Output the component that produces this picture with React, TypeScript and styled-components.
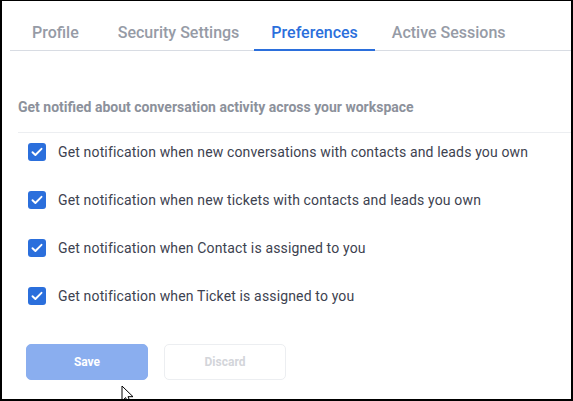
import React from 'react';
import styled, { createGlobalStyle } from 'styled-components';

const GlobalStyle = createGlobalStyle`
  html, body {
    margin: 0;
    padding: 0;
    background: #fff;
  }
  * {
    box-sizing: border-box;
  }
`;

const TABS = ['Profile', 'Security Settings', 'Preferences', 'Active Sessions'];
const OPTIONS = [
  'Get notification when new conversations with contacts and leads you own',
  'Get notification when new tickets with contacts and leads you own',
  'Get notification when Contact is assigned to you',
  'Get notification when Ticket is assigned to you',
];

export default function App(): JSX.Element {
  return (
    <>
      <GlobalStyle />
      <Frame>
        <TabList>
          {TABS.map((tab) => (
            <Tab key={tab} $active={tab === 'Preferences'} type="button">
              {tab}
            </Tab>
          ))}
        </TabList>
        <Section>
          <Heading>Get notified about conversation activity across your workspace</Heading>
          <OptionList>
            {OPTIONS.map((option) => (
              <Option key={option}>
                <Checkbox>
                  <svg width="12" height="10" viewBox="0 0 12 10" fill="none">
                    <path d="M1.5 5.2L4.4 8L10.5 1.8" stroke="#fff" strokeWidth="1.9" strokeLinecap="round" strokeLinejoin="round" />
                  </svg>
                </Checkbox>
                <OptionLabel>{option}</OptionLabel>
              </Option>
            ))}
          </OptionList>
          <Actions>
            <Button $primary type="button">Save</Button>
            <Button type="button">Discard</Button>
          </Actions>
        </Section>
        <Cursor width="14" height="20" viewBox="0 0 14 20">
          <path d="M1 1L1 16L4.6 12.6L7.2 18.6L9.6 17.6L7 11.7L12 11.7Z" fill="#fff" stroke="#000" strokeWidth="1" strokeLinejoin="round" />
        </Cursor>
      </Frame>
    </>
  );
}

const Frame = styled.div`
  position: relative;
  width: 573px;
  height: 401px;
  overflow: hidden;
  background: #fff;
  border-style: solid;
  border-color: #000;
  border-width: 1px 2px 2px 2px;
  font-family: Roboto, 'Liberation Sans', sans-serif;
`;

const TabList = styled.div`
  display: flex;
  margin-left: 8px;
  padding-left: 5px;
  border-bottom: 1px solid #d8dce3;
`;

const Tab = styled.button<{ $active?: boolean }>`
  background: none;
  border: none;
  border-bottom: 2px solid ${(p) => (p.$active ? '#2b6fdc' : 'transparent')};
  margin-bottom: -1px;
  padding: 22px 17px 6px;
  font-family: inherit;
  font-size: 16px;
  line-height: 20px;
  font-weight: 500;
  color: ${(p) => (p.$active ? '#2b6fdc' : '#969ba6')};
  cursor: pointer;

  &:nth-child(2) {
    margin-left: 5px;
  }

  &:nth-child(3) {
    margin-left: -2px;
  }
`;

const Section = styled.div`
  padding: 48px 0 0 16px;
`;

const Heading = styled.h3`
  margin: 0;
  padding-bottom: 17px;
  border-bottom: 1px solid #eceef1;
  font-size: 14px;
  line-height: 16px;
  font-weight: 700;
  color: #8c919b;
`;

const OptionList = styled.div`
  display: flex;
  flex-direction: column;
  gap: 28px;
  padding: 9px 0 0 10px;
`;

const Option = styled.label`
  display: flex;
  align-items: center;
  gap: 12px;
  height: 20px;
`;

const Checkbox = styled.span`
  display: flex;
  align-items: center;
  justify-content: center;
  width: 18px;
  height: 18px;
  border-radius: 3px;
  background: #2b6fdc;
`;

const OptionLabel = styled.span`
  font-size: 14px;
  line-height: 20px;
  letter-spacing: 0.15px;
  color: #3d4250;
`;

const Actions = styled.div`
  display: flex;
  gap: 16px;
  margin: 38px 0 0 8px;
`;

const Button = styled.button<{ $primary?: boolean }>`
  width: 122px;
  height: 36px;
  border-radius: 5px;
  border: 1px solid ${(p) => (p.$primary ? '#8aaeef' : '#eceef1')};
  background: ${(p) => (p.$primary ? '#8aaeef' : '#fff')};
  color: ${(p) => (p.$primary ? '#fff' : '#d3d5da')};
  font-family: inherit;
  font-size: 12px;
  font-weight: 700;
`;

const Cursor = styled.svg`
  position: absolute;
  left: 119px;
  top: 384px;
`;
